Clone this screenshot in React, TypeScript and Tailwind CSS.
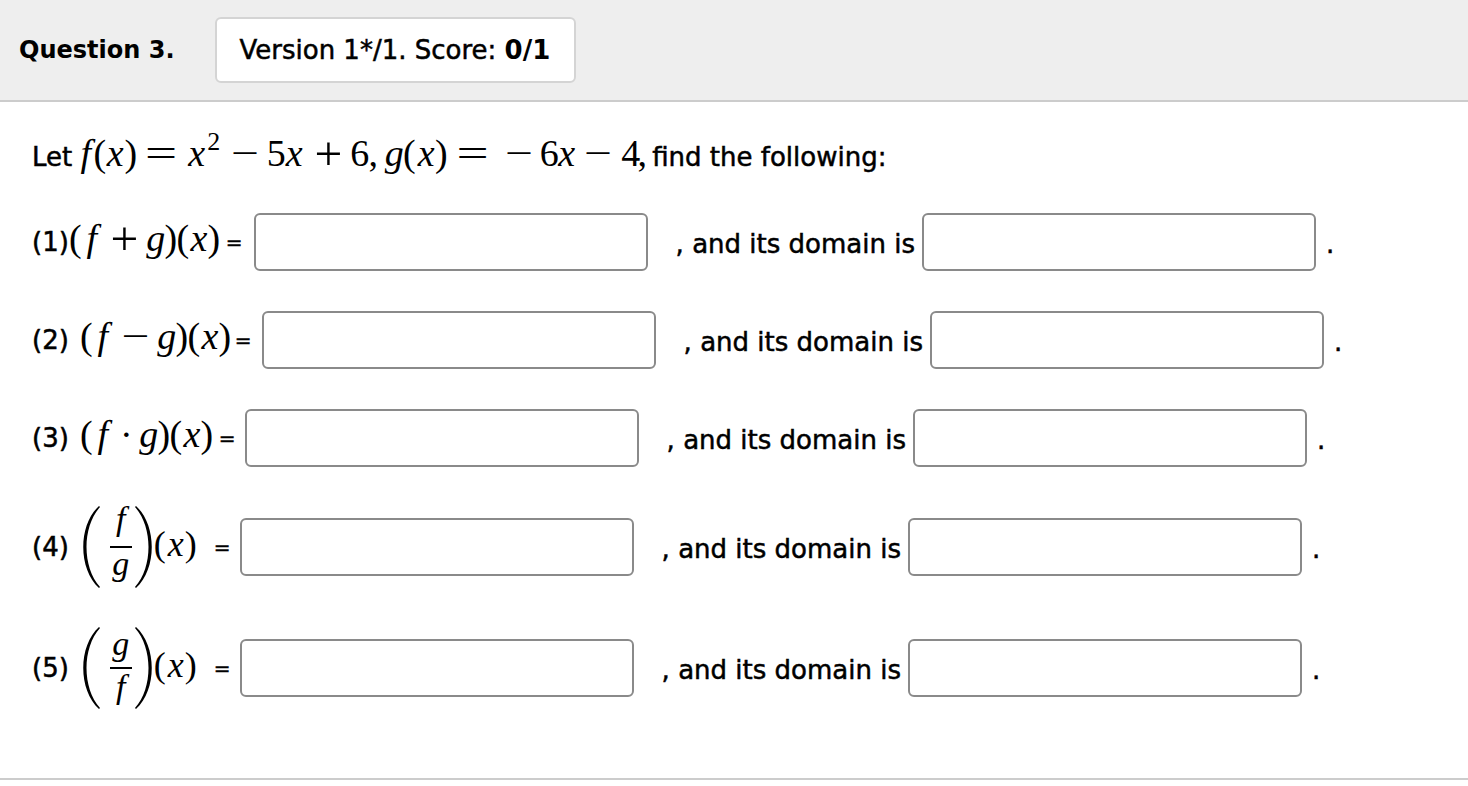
import React from 'react';

type GProps = { w: string; i?: boolean; children: React.ReactNode };

// one math glyph in a fixed-width box, centred
const G: React.FC<GProps> = ({ w, i, children }) => (
    <span className={`flex shrink-0 justify-center whitespace-nowrap ${w} ${i ? 'italic' : ''}`}>{children}</span>
);

const BigParen: React.FC<{ left?: boolean; className?: string }> = ({ left, className }) => (
    <svg viewBox="0 0 20 84" className={`h-[84px] w-[20px] shrink-0 ${className ?? ''}`}>
        {left ? (
            <path d="M18 1 C-3 20, -3 64, 18 83 L19 82 C1 62, 1 22, 19 2 Z" fill="#000" />
        ) : (
            <path d="M2 1 C23 20, 23 64, 2 83 L1 82 C19 62, 19 22, 1 2 Z" fill="#000" />
        )}
    </svg>
);

const Field: React.FC<{ className?: string }> = ({ className }) => (
    <input
        type="text"
        className={`h-[58px] w-[394px] shrink-0 rounded-[6px] border-2 border-[#8a8a8a] bg-white outline-none ${className ?? ''}`}
    />
);

type RowProps = { label: React.ReactNode; fieldMl: string; mt: string };

const Row: React.FC<RowProps> = ({ label, fieldMl, mt }) => (
    <div className={`flex h-[58px] items-center ${mt}`}>
        {label}
        <Field className={fieldMl} />
        <span className="ml-[28px] mt-[4px] shrink-0 whitespace-nowrap leading-[30px]">, and its domain is</span>
        <Field className="ml-[7px]" />
        <span className="ml-[10px] mt-[4px] shrink-0 leading-[30px]">.</span>
    </div>
);

const SmallX: React.FC = () => (
    <span className="mb-[6px] flex items-baseline font-['Liberation_Serif',serif] text-[36px] leading-[36px] [-webkit-text-stroke:0px]">
        <G w="w-[12px]">(</G>
        <G w="w-[20px]" i>x</G>
        <G w="w-[10px]">)</G>
    </span>
);

const MATH = "flex items-baseline font-['Liberation_Serif',serif] text-[38px] leading-[38px] [-webkit-text-stroke:0px]";

export default function App() {
    return (
        <div className="min-h-screen bg-white font-['DejaVu_Sans',sans-serif] text-[26px] text-black [-webkit-text-stroke:0.5px_#000]">
            {/* QUESTION HEADER */}
            <div className="flex h-[102px] items-center border-b-2 border-[#cccccc] bg-[#eeeeee] pl-[19px]">
                <span className="text-[24px] font-bold [-webkit-text-stroke:0px]">Question 3.</span>
                <div className="ml-[40px] flex h-[66px] w-[361px] items-center rounded-[6px] border-2 border-[#d4d4d4] bg-white pl-[23px]">
                    <span className="whitespace-nowrap">
                        Version 1*/1. Score: <span className="font-bold [-webkit-text-stroke:0px]">0/1</span>
                    </span>
                </div>
            </div>

            <div className="pl-[32px] pt-[32px] pb-[81px]">
                {/* PROBLEM STATEMENT */}
                <div className="flex items-baseline">
                    <span className="leading-[30px]">Let</span>
                    <span className={`ml-[4px] ${MATH}`}>
                        <G w="w-[19px]" i>f</G>
                        <G w="w-[9px]">(</G>
                        <G w="w-[22px]" i>x</G>
                        <G w="w-[9px]">)</G>
                        <G w="w-[52px] scale-x-150">=</G>
                        <G w="w-[19px]" i>x</G>
                        <span className="relative -top-[16px] flex w-[15px] shrink-0 justify-center text-[26px]">2</span>
                        <G w="w-[48px] scale-x-[1.3]">−</G>
                        <G w="w-[14px]">5</G>
                        <G w="w-[22px]" i>x</G>
                        <G w="w-[47px] scale-[1.3]">+</G>
                        <G w="w-[15px]">6</G>
                        <G w="w-[12px]">,</G>
                        <G w="ml-[6px] w-[18px]" i>g</G>
                        <G w="w-[12px]">(</G>
                        <G w="w-[22px]" i>x</G>
                        <G w="w-[8px]">)</G>
                        <G w="w-[55px] scale-x-150">=</G>
                        <G w="w-[38px] scale-x-[1.3]">−</G>
                        <G w="ml-[4px] w-[14px]">6</G>
                        <G w="w-[21px]" i>x</G>
                        <G w="w-[42px] scale-x-[1.3]">−</G>
                        <G w="ml-[4px] w-[15px]">4</G>
                        <G w="w-[8px]">,</G>
                    </span>
                    <span className="ml-[6px] whitespace-nowrap leading-[30px]">find the following:</span>
                </div>

                {/* (1) f + g */}
                <Row
                    mt="mt-[36px]"
                    fieldMl="ml-[11px]"
                    label={
                        <div className="mb-[7px] flex shrink-0 items-baseline">
                            <span className="leading-[30px]">(1)</span>
                            <span className={MATH}>
                                <G w="w-[13px]">(</G>
                                <G w="w-[20px]" i>f</G>
                                <G w="w-[45px] scale-[1.3]">+</G>
                                <G w="w-[18px]" i>g</G>
                                <G w="w-[12px]">)</G>
                                <G w="w-[12px]">(</G>
                                <G w="w-[20px]" i>x</G>
                                <G w="w-[10px]">)</G>
                            </span>
                            <span className="relative -top-[2px] ml-[7px] text-[20px] leading-[30px]">=</span>
                        </div>
                    }
                />

                {/* (2) f - g */}
                <Row
                    mt="mt-[40px]"
                    fieldMl="ml-[10px]"
                    label={
                        <div className="mb-[7px] flex shrink-0 items-baseline">
                            <span className="leading-[30px]">(2)</span>
                            <span className={`ml-[11px] ${MATH}`}>
                                <G w="w-[13px]">(</G>
                                <G w="w-[20px]" i>f</G>
                                <G w="w-[45px] scale-x-[1.3]">−</G>
                                <G w="w-[18px]" i>g</G>
                                <G w="w-[12px]">)</G>
                                <G w="w-[12px]">(</G>
                                <G w="w-[20px]" i>x</G>
                                <G w="w-[10px]">)</G>
                            </span>
                            <span className="relative -top-[2px] ml-[5px] text-[20px] leading-[30px]">=</span>
                        </div>
                    }
                />

                {/* (3) f · g */}
                <Row
                    mt="mt-[40px]"
                    fieldMl="ml-[9px]"
                    label={
                        <div className="mb-[7px] flex shrink-0 items-baseline">
                            <span className="leading-[30px]">(3)</span>
                            <span className={`ml-[11px] ${MATH}`}>
                                <G w="w-[13px]">(</G>
                                <G w="w-[20px]" i>f</G>
                                <G w="w-[27px]">·</G>
                                <G w="w-[18px]" i>g</G>
                                <G w="w-[12px]">)</G>
                                <G w="w-[12px]">(</G>
                                <G w="w-[20px]" i>x</G>
                                <G w="w-[10px]">)</G>
                            </span>
                            <span className="relative -top-[2px] ml-[7px] text-[20px] leading-[30px]">=</span>
                        </div>
                    }
                />

                {/* (4) f / g */}
                <Row
                    mt="mt-[51px]"
                    fieldMl="ml-[9px]"
                    label={
                        <div className="flex shrink-0 items-center">
                            <span className="leading-[30px]">(4)</span>
                            <BigParen left className="ml-[12px]" />
                            <span className="ml-[9px] mr-[2px] flex flex-col items-center font-['Liberation_Serif',serif] text-[34px] italic [-webkit-text-stroke:0px]">
                                <span className="leading-[30px]">f</span>
                                <span className="mt-[12px] h-[2px] w-[22px] bg-black" />
                                <span className="mt-[1px] pb-[11px] leading-[30px]">g</span>
                            </span>
                            <BigParen />
                            <SmallX />
                            <span className="ml-[18px] text-[20px] leading-[30px]">=</span>
                        </div>
                    }
                />

                {/* (5) g / f */}
                <Row
                    mt="mt-[63px]"
                    fieldMl="ml-[9px]"
                    label={
                        <div className="flex shrink-0 items-center">
                            <span className="leading-[30px]">(5)</span>
                            <BigParen left className="ml-[12px]" />
                            <span className="ml-[9px] mr-[2px] flex flex-col items-center font-['Liberation_Serif',serif] text-[34px] italic [-webkit-text-stroke:0px]">
                                <span className="leading-[30px]">g</span>
                                <span className="mt-[8px] h-[2px] w-[22px] bg-black" />
                                <span className="mt-[3px] pb-[5px] leading-[30px]">f</span>
                            </span>
                            <BigParen />
                            <SmallX />
                            <span className="ml-[18px] text-[20px] leading-[30px]">=</span>
                        </div>
                    }
                />
            </div>

            <div className="h-[2px] bg-[#cccccc]" />
        </div>
    );
}
